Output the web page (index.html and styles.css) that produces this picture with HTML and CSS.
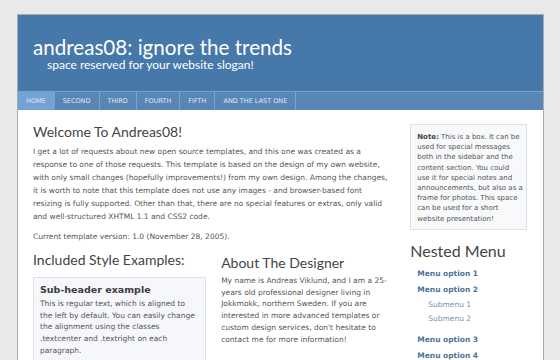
FILE: index.html
```html
<!DOCTYPE html>
<html lang="en">
<head>
  <meta charset="UTF-8">
  <title>andreas08: ignore the trends</title>
  <link rel="stylesheet" href="styles.css">
</head>
<body>

  <div class="container">
    <header class="header">
      <h1>andreas08: ignore the trends</h1>
      <p class="slogan">space reserved for your website slogan!</p>
    </header>

    <nav class="navigation">
      <a href="#" class="active">Home</a>
      <a href="#">Second</a>
      <a href="#">Third</a>
      <a href="#">Fourth</a>
      <a href="#">Fifth</a>
      <a href="#">And the last one</a>
    </nav>

    <div class="wrap">
      <div class="content">
        <h2>Welcome To Andreas08!</h2>
        <p>I get a lot of requests about new open source templates, and this one was created as a response to one of those requests. This template is based on the design of my own website, with only small changes (hopefully improvements!) from my own design. Among the changes, it is worth to note that this template does not use any images - and browser-based font resizing is fully supported. Other than that, there are no special features or extras, only valid and well-structured XHTML 1.1 and CSS2 code.</p>
        <p>Current template version: 1.0 (November 28, 2005).</p>

        <div class="columns">
          <div class="col">
            <h2>Included Style Examples:</h2>
            <div class="box">
              <h3>Sub-header example</h3>
              <p>This is regular text, which is aligned to the left by default. You can easily change the alignment using the classes .textcenter and .textright on each paragraph.</p>
            </div>
          </div>
          <div class="col">
            <h2 class="about">About The Designer</h2>
            <p class="small">My name is Andreas Viklund, and I am a 25-years old professional designer living in Jokkmokk, northern Sweden. If you are interested in more advanced templates or custom design services, don't hesitate to contact me for more information!</p>
            <h2 class="next">Some Other Templates</h2>
          </div>
        </div>
      </div>

      <div class="sidebar">
        <div class="note">
          <strong>Note:</strong> This is a box. It can be used for special messages both in the sidebar and the content section. You could use it for special notes and announcements, but also as a frame for photos. This space can be used for a short website presentation!
        </div>

        <h2>Nested Menu</h2>
        <ul class="menu">
          <li><a href="#">Menu option 1</a></li>
          <li><a href="#">Menu option 2</a>
            <ul>
              <li><a href="#">Submenu 1</a></li>
              <li><a href="#">Submenu 2</a></li>
            </ul>
          </li>
          <li><a href="#">Menu option 3</a></li>
          <li><a href="#">Menu option 4</a></li>
        </ul>
      </div>
    </div>
  </div>

</body>
</html>
```

FILE: styles.css
```css
body {
  margin: 0;
  background: #e8e9ea;
  font-family: 'DejaVu Sans', Verdana, sans-serif;
  font-size: 7.5px;
  color: #555;
}
.container {
  width: 525px;
  margin: 14px 0 0 17px;
  background: #fff;
  border: 1px solid #a9acae;
  border-bottom: none;
  height: 400px;
}
.header {
  background: #4679a9;
  height: 76px;
  padding: 21px 0 0 15px;
  box-sizing: border-box;
  color: #fff;
}
.header h1 {
  margin: 0;
  font-family: 'Lato', sans-serif;
  font-weight: normal;
  font-size: 20.6px;
  line-height: 22px;
}
.slogan {
  margin: 0 0 0 14px;
  font-family: 'Lato', sans-serif;
  font-size: 12px;
  line-height: 13px;
}
.navigation {
  display: flex;
  background: #5887b5;
  border-top: 1px solid #7aa3cb;
  height: 18px;
}
.navigation a {
  display: block;
  padding: 0 8px;
  line-height: 18px;
  color: #dfe9f4;
  text-decoration: none;
  text-transform: uppercase;
  font-size: 6.5px;
  border-right: 1px solid #7aa3cb;
}
.navigation a.active {
  background: #72a3d4;
}
.wrap {
  display: flex;
  padding: 0 16px 0 15px;
}
.content {
  width: 362px;
}
.content > p {
  padding-right: 4px;
}
h2 {
  font-family: 'Lato', sans-serif;
  font-weight: normal;
  font-size: 14px;
  line-height: 17px;
  color: #444;
  margin: 13px 0 5px;
}
.content p {
  margin: 0 0 7px;
  line-height: 13px;
}
.columns {
  display: flex;
  gap: 15px;
}
.col {
  flex: 1;
}
.col h2 {
  margin: 1px 0 9px;
}
.col h2.about {
  margin: 4px 0 4px;
}
.box {
  background: #f5f7fa;
  border: 1px solid #dde1e6;
  padding: 5px 6px;
}
.box h3 {
  margin: 0 0 2px;
  font-size: 9.5px;
  line-height: 13px;
  color: #3c3c3c;
}
.content .box p, .content p.small {
  line-height: 11.7px;
  margin: 0;
}
.col h2.next {
  color: #999;
  margin-top: 11px;
}
.sidebar {
  width: 117px;
  margin-left: 16px;
  padding-top: 14px;
}
.note {
  background: #f7f9fb;
  border: 1px solid #dde1e6;
  padding: 7px 3px 5px 6px;
  font-size: 7px;
  line-height: 10.2px;
}
.note strong {
  color: #444;
}
.sidebar h2 {
  font-size: 16px;
  line-height: 19px;
  margin: 11px 0 6px;
}
.menu, .menu ul {
  list-style: none;
  margin: 0;
  padding: 0;
}
.menu li a {
  display: block;
  padding: 0 0 0 7px;
  line-height: 16px;
  font-weight: bold;
  color: #4d739c;
  text-decoration: none;
}
.menu ul {
  margin-bottom: 5px;
}
.menu ul li a {
  padding-left: 18px;
  font-weight: normal;
  color: #7593b4;
  line-height: 14.5px;
}
```
